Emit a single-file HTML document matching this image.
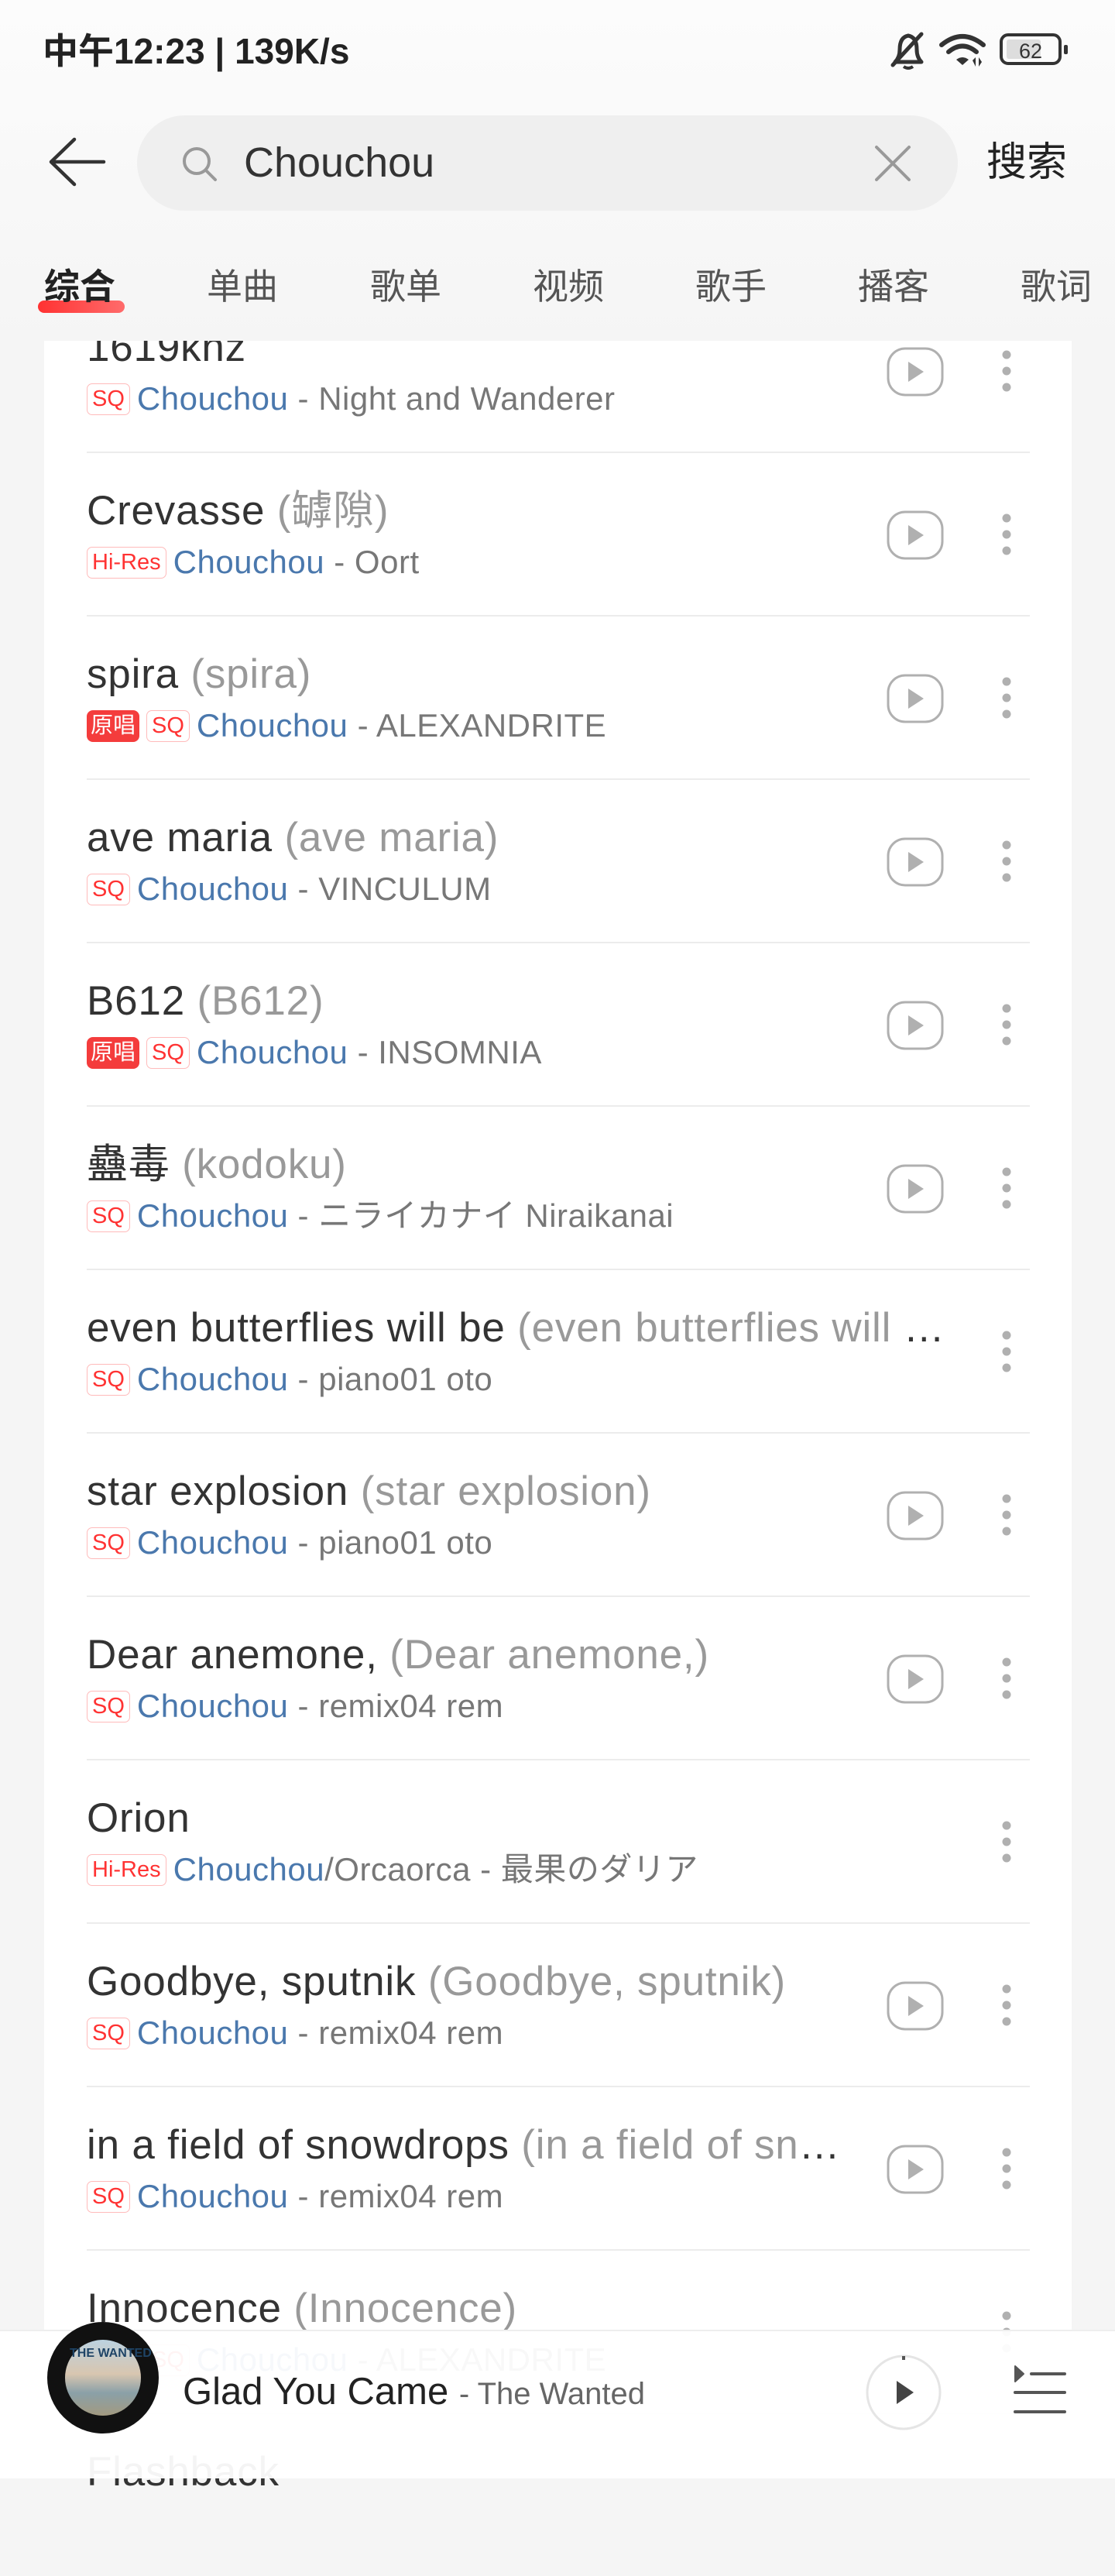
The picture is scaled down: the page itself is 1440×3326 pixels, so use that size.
<!DOCTYPE html>
<html><head><meta charset="utf-8">
<style>
*{margin:0;padding:0;box-sizing:border-box}
html,body{width:1440px;height:3200px;overflow:hidden;background:#f5f5f5;font-family:"Liberation Sans","Noto Sans CJK SC",sans-serif}
.abs{position:absolute}
#card{position:absolute;left:57px;top:400px;width:1327px;height:2800px;background:#fff}
.row{position:absolute;left:57px;width:1327px;height:211px}
.div{position:absolute;left:55px;right:54px;top:0;height:2px;background:#ececec}
.t{position:absolute;left:55px;top:47px;font-size:53px;line-height:60px;letter-spacing:0.8px;color:#333;white-space:nowrap;overflow:hidden;text-overflow:ellipsis}
.t span{color:#999}
.s{position:absolute;left:55px;top:120px;font-size:42px;line-height:46px;letter-spacing:0.5px;color:#777;white-space:nowrap;display:flex;align-items:center}
.s b{font-weight:normal;color:#4a78ad}
.bd{display:inline-block;height:41px;line-height:39px;font-size:29px;letter-spacing:0;border:1.5px solid #fbb;color:#f33;border-radius:7px;padding:0 6px;margin-right:9px}
.yc{display:inline-block;height:41px;line-height:41px;font-size:29px;letter-spacing:0;background:#f43c3c;color:#fff;border-radius:8px;padding:0 5px;margin-right:9px}
.pl{position:absolute;left:1088px;top:76px}
.dt{position:absolute;left:1237px;top:80px}
#hdr{position:absolute;left:0;top:0;width:1440px;height:440px;background:linear-gradient(#fcfcfc,#f5f5f5)}
</style></head><body>
<div id="card"></div>

<div class="row" style="top:372px"><div class="t">1619knz</div><div class="s"><span class="bd">SQ</span><b>Chouchou</b>&nbsp;- Night and Wanderer</div>
<svg class="pl" width="74" height="64"><rect x="2" y="2" width="70" height="60" rx="22" fill="none" stroke="#b0b0b0" stroke-width="3"/><path d="M28 19 L48 32 L28 45Z" fill="#b0b0b0"/></svg>
<svg class="dt" width="12" height="54"><circle cx="6" cy="6" r="5.5" fill="#b0b0b0"/><circle cx="6" cy="27" r="5.5" fill="#b0b0b0"/><circle cx="6" cy="48" r="5.5" fill="#b0b0b0"/></svg></div>

<div class="row" style="top:583px"><div class="div"></div><div class="t">Crevasse <span>(罅隙)</span></div><div class="s"><span class="bd">Hi-Res</span><b>Chouchou</b>&nbsp;- Oort</div>
<svg class="pl" width="74" height="64"><rect x="2" y="2" width="70" height="60" rx="22" fill="none" stroke="#b0b0b0" stroke-width="3"/><path d="M28 19 L48 32 L28 45Z" fill="#b0b0b0"/></svg>
<svg class="dt" width="12" height="54"><circle cx="6" cy="6" r="5.5" fill="#b0b0b0"/><circle cx="6" cy="27" r="5.5" fill="#b0b0b0"/><circle cx="6" cy="48" r="5.5" fill="#b0b0b0"/></svg></div>

<div class="row" style="top:794px"><div class="div"></div><div class="t">spira <span>(spira)</span></div><div class="s"><span class="yc">原唱</span><span class="bd">SQ</span><b>Chouchou</b>&nbsp;- ALEXANDRITE</div>
<svg class="pl" width="74" height="64"><rect x="2" y="2" width="70" height="60" rx="22" fill="none" stroke="#b0b0b0" stroke-width="3"/><path d="M28 19 L48 32 L28 45Z" fill="#b0b0b0"/></svg>
<svg class="dt" width="12" height="54"><circle cx="6" cy="6" r="5.5" fill="#b0b0b0"/><circle cx="6" cy="27" r="5.5" fill="#b0b0b0"/><circle cx="6" cy="48" r="5.5" fill="#b0b0b0"/></svg></div>

<div class="row" style="top:1005px"><div class="div"></div><div class="t">ave maria <span>(ave maria)</span></div><div class="s"><span class="bd">SQ</span><b>Chouchou</b>&nbsp;- VINCULUM</div>
<svg class="pl" width="74" height="64"><rect x="2" y="2" width="70" height="60" rx="22" fill="none" stroke="#b0b0b0" stroke-width="3"/><path d="M28 19 L48 32 L28 45Z" fill="#b0b0b0"/></svg>
<svg class="dt" width="12" height="54"><circle cx="6" cy="6" r="5.5" fill="#b0b0b0"/><circle cx="6" cy="27" r="5.5" fill="#b0b0b0"/><circle cx="6" cy="48" r="5.5" fill="#b0b0b0"/></svg></div>

<div class="row" style="top:1216px"><div class="div"></div><div class="t">B612 <span>(B612)</span></div><div class="s"><span class="yc">原唱</span><span class="bd">SQ</span><b>Chouchou</b>&nbsp;- INSOMNIA</div>
<svg class="pl" width="74" height="64"><rect x="2" y="2" width="70" height="60" rx="22" fill="none" stroke="#b0b0b0" stroke-width="3"/><path d="M28 19 L48 32 L28 45Z" fill="#b0b0b0"/></svg>
<svg class="dt" width="12" height="54"><circle cx="6" cy="6" r="5.5" fill="#b0b0b0"/><circle cx="6" cy="27" r="5.5" fill="#b0b0b0"/><circle cx="6" cy="48" r="5.5" fill="#b0b0b0"/></svg></div>

<div class="row" style="top:1427px"><div class="div"></div><div class="t">蠱毒 <span>(kodoku)</span></div><div class="s"><span class="bd">SQ</span><b>Chouchou</b>&nbsp;- ニライカナイ Niraikanai</div>
<svg class="pl" width="74" height="64"><rect x="2" y="2" width="70" height="60" rx="22" fill="none" stroke="#b0b0b0" stroke-width="3"/><path d="M28 19 L48 32 L28 45Z" fill="#b0b0b0"/></svg>
<svg class="dt" width="12" height="54"><circle cx="6" cy="6" r="5.5" fill="#b0b0b0"/><circle cx="6" cy="27" r="5.5" fill="#b0b0b0"/><circle cx="6" cy="48" r="5.5" fill="#b0b0b0"/></svg></div>

<div class="row" style="top:1638px"><div class="div"></div><div class="t" style="width:1118px">even butterflies will be <span>(even butterflies will be)</span></div><div class="s"><span class="bd">SQ</span><b>Chouchou</b>&nbsp;- piano01 oto</div>
<svg class="dt" width="12" height="54"><circle cx="6" cy="6" r="5.5" fill="#b0b0b0"/><circle cx="6" cy="27" r="5.5" fill="#b0b0b0"/><circle cx="6" cy="48" r="5.5" fill="#b0b0b0"/></svg></div>

<div class="row" style="top:1849px"><div class="div"></div><div class="t">star explosion <span>(star explosion)</span></div><div class="s"><span class="bd">SQ</span><b>Chouchou</b>&nbsp;- piano01 oto</div>
<svg class="pl" width="74" height="64"><rect x="2" y="2" width="70" height="60" rx="22" fill="none" stroke="#b0b0b0" stroke-width="3"/><path d="M28 19 L48 32 L28 45Z" fill="#b0b0b0"/></svg>
<svg class="dt" width="12" height="54"><circle cx="6" cy="6" r="5.5" fill="#b0b0b0"/><circle cx="6" cy="27" r="5.5" fill="#b0b0b0"/><circle cx="6" cy="48" r="5.5" fill="#b0b0b0"/></svg></div>

<div class="row" style="top:2060px"><div class="div"></div><div class="t">Dear anemone, <span>(Dear anemone,)</span></div><div class="s"><span class="bd">SQ</span><b>Chouchou</b>&nbsp;- remix04 rem</div>
<svg class="pl" width="74" height="64"><rect x="2" y="2" width="70" height="60" rx="22" fill="none" stroke="#b0b0b0" stroke-width="3"/><path d="M28 19 L48 32 L28 45Z" fill="#b0b0b0"/></svg>
<svg class="dt" width="12" height="54"><circle cx="6" cy="6" r="5.5" fill="#b0b0b0"/><circle cx="6" cy="27" r="5.5" fill="#b0b0b0"/><circle cx="6" cy="48" r="5.5" fill="#b0b0b0"/></svg></div>

<div class="row" style="top:2271px"><div class="div"></div><div class="t">Orion</div><div class="s"><span class="bd">Hi-Res</span><b>Chouchou</b>/Orcaorca - 最果のダリア</div>
<svg class="dt" width="12" height="54"><circle cx="6" cy="6" r="5.5" fill="#b0b0b0"/><circle cx="6" cy="27" r="5.5" fill="#b0b0b0"/><circle cx="6" cy="48" r="5.5" fill="#b0b0b0"/></svg></div>

<div class="row" style="top:2482px"><div class="div"></div><div class="t">Goodbye, sputnik <span>(Goodbye, sputnik)</span></div><div class="s"><span class="bd">SQ</span><b>Chouchou</b>&nbsp;- remix04 rem</div>
<svg class="pl" width="74" height="64"><rect x="2" y="2" width="70" height="60" rx="22" fill="none" stroke="#b0b0b0" stroke-width="3"/><path d="M28 19 L48 32 L28 45Z" fill="#b0b0b0"/></svg>
<svg class="dt" width="12" height="54"><circle cx="6" cy="6" r="5.5" fill="#b0b0b0"/><circle cx="6" cy="27" r="5.5" fill="#b0b0b0"/><circle cx="6" cy="48" r="5.5" fill="#b0b0b0"/></svg></div>

<div class="row" style="top:2693px"><div class="div"></div><div class="t" style="width:990px">in a field of snowdrops <span>(in a field of snowdrops)</span></div><div class="s"><span class="bd">SQ</span><b>Chouchou</b>&nbsp;- remix04 rem</div>
<svg class="pl" width="74" height="64"><rect x="2" y="2" width="70" height="60" rx="22" fill="none" stroke="#b0b0b0" stroke-width="3"/><path d="M28 19 L48 32 L28 45Z" fill="#b0b0b0"/></svg>
<svg class="dt" width="12" height="54"><circle cx="6" cy="6" r="5.5" fill="#b0b0b0"/><circle cx="6" cy="27" r="5.5" fill="#b0b0b0"/><circle cx="6" cy="48" r="5.5" fill="#b0b0b0"/></svg></div>

<div class="row" style="top:2904px"><div class="div"></div><div class="t">Innocence <span>(Innocence)</span></div><div class="s"><span class="yc">原唱</span><span class="bd">SQ</span><b>Chouchou</b>&nbsp;- ALEXANDRITE</div>
<svg class="dt" width="12" height="54"><circle cx="6" cy="6" r="5.5" fill="#b0b0b0"/><circle cx="6" cy="27" r="5.5" fill="#b0b0b0"/><circle cx="6" cy="48" r="5.5" fill="#b0b0b0"/></svg></div>

<div class="row" style="top:3115px"><div class="div"></div><div class="t">Flashback</div></div>

<!-- header -->
<div id="hdr">
 <div class="abs" style="left:55px;top:39px;font-size:46px;line-height:54px;color:#222;font-weight:bold">中午12:23 | 139K/s</div>
 <svg class="abs" style="left:1148px;top:40px" width="232" height="52" viewBox="0 0 232 52">
  <path d="M8 40 Q14 34 14 24 Q14 8 25 6 Q36 8 36 24 Q36 34 42 40 Z" fill="none" stroke="#333" stroke-width="5" stroke-linejoin="round"/>
  <path d="M19 46 Q25 50 31 46" fill="none" stroke="#333" stroke-width="4"/>
  <path d="M5 44 L42 4" stroke="#333" stroke-width="5" stroke-linecap="round"/>
  <path d="M68 18 Q95 -4 122 18" fill="none" stroke="#333" stroke-width="6" stroke-linecap="round"/>
  <path d="M77 27 Q95 12 113 27" fill="none" stroke="#333" stroke-width="6" stroke-linecap="round"/>
  <path d="M87 37 Q95 31 103 37 L95 44Z" fill="#333"/>
  <path d="M108 38 L112 34 L112 46Z M116 34 L120 40 L116 46Z" fill="#333"/>
  <rect x="145" y="5" width="76" height="37" rx="9" fill="none" stroke="#333" stroke-width="4"/>
  <rect x="152" y="11" width="44" height="25" rx="3" fill="#ddd"/>
  <rect x="226" y="18" width="5" height="12" rx="2" fill="#333"/>
  <text x="183" y="35" font-size="27" fill="#333" text-anchor="middle" font-family="Liberation Sans">62</text>
 </svg>
 <svg class="abs" style="left:60px;top:176px" width="78" height="66"><path d="M36 4 L6 33 L36 62 M6 33 L74 33" fill="none" stroke="#333" stroke-width="4.5" stroke-linecap="round" stroke-linejoin="round"/></svg>
 <div class="abs" style="left:177px;top:149px;width:1060px;height:123px;border-radius:62px;background:#efefef"></div>
 <svg class="abs" style="left:232px;top:186px" width="52" height="52"><circle cx="22" cy="22" r="16" fill="none" stroke="#999" stroke-width="4"/><path d="M34 34 L46 46" stroke="#999" stroke-width="4" stroke-linecap="round"/></svg>
 <div class="abs" style="left:315px;top:178px;font-size:54px;line-height:64px;color:#333">Chouchou</div>
 <svg class="abs" style="left:1128px;top:186px" width="50" height="50"><path d="M4 4 L46 46 M46 4 L4 46" stroke="#999" stroke-width="4" stroke-linecap="round"/></svg>
 <div class="abs" style="left:1274px;top:178px;font-size:52px;line-height:64px;color:#222">搜索</div>
 <div class="abs" style="left:49px;top:388px;width:112px;height:16px;border-radius:8px;background:linear-gradient(90deg,#ff3232,#ff6b6b)"></div>
 <div class="abs" style="left:57px;top:340px;font-size:46px;line-height:60px;color:#222;font-weight:bold">综合</div>
 <div class="abs" style="left:267px;top:340px;font-size:46px;line-height:60px;color:#555">单曲</div>
 <div class="abs" style="left:478px;top:340px;font-size:46px;line-height:60px;color:#555">歌单</div>
 <div class="abs" style="left:688px;top:340px;font-size:46px;line-height:60px;color:#555">视频</div>
 <div class="abs" style="left:898px;top:340px;font-size:46px;line-height:60px;color:#555">歌手</div>
 <div class="abs" style="left:1108px;top:340px;font-size:46px;line-height:60px;color:#555">播客</div>
 <div class="abs" style="left:1318px;top:340px;font-size:46px;line-height:60px;color:#555">歌词</div>
</div>

<!-- player -->
<div class="abs" style="left:0;top:3008px;width:1440px;height:192px;background:rgba(255,255,255,0.95);border-top:2px solid #eee"></div>
<div class="abs" style="left:61px;top:2998px;width:144px;height:144px;border-radius:50%;background:#111"></div>
<div class="abs" style="left:84px;top:3021px;width:98px;height:98px;border-radius:50%;background:linear-gradient(#bcd2e0 0%,#d8c6b0 45%,#8aa0a8 70%,#a39a80 100%)"></div>
<div class="abs" style="left:90px;top:3030px;font-size:16px;font-weight:bold;color:#1f4466">THE WANTED</div>
<div class="abs" style="left:236px;top:3058px;font-size:49px;line-height:60px;color:#222;white-space:nowrap">Glad You Came <span style="font-size:40px;color:#666">- The Wanted</span></div>
<svg class="abs" style="left:1116px;top:3038px" width="102" height="102"><circle cx="51" cy="51" r="47" fill="none" stroke="#e5e5e5" stroke-width="3"/><path d="M51 4 L51 9" stroke="#555" stroke-width="4"/><path d="M42 36 L64 51 L42 66Z" fill="#444"/></svg>
<svg class="abs" style="left:1308px;top:3052px" width="70" height="66"><path d="M3 3 L14 13 L3 23Z" fill="#555" stroke="#555" stroke-width="2" stroke-linejoin="round"/><path d="M24 13 L67 13 M3 37 L67 37 M3 62 L67 62" stroke="#555" stroke-width="4" stroke-linecap="round"/></svg>
</body></html>
